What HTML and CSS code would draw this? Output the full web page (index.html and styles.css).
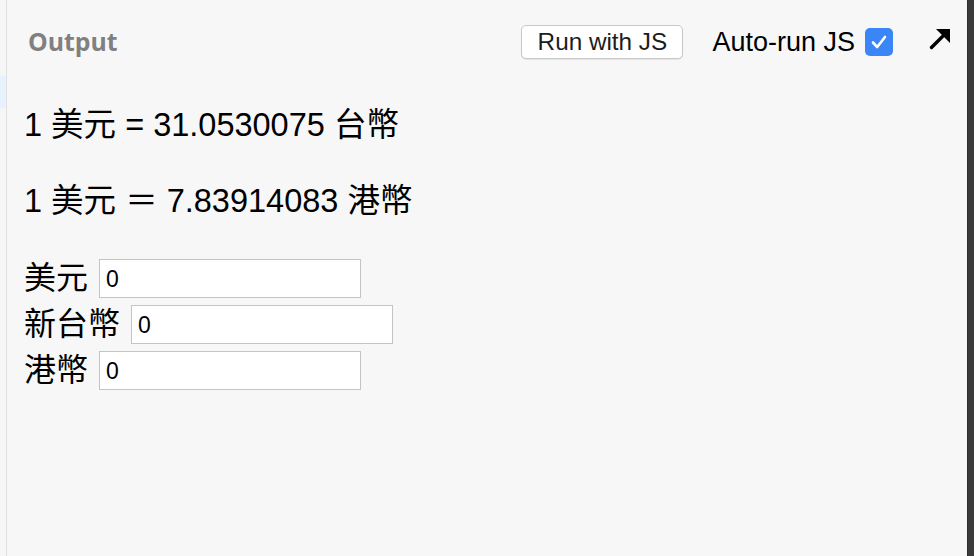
FILE: index.html
```html
<!DOCTYPE html>
<html lang="zh-Hant">
<head>
<meta charset="utf-8">
<title>Output</title>
<link rel="stylesheet" href="styles.css">
</head>
<body>
<div class="app">
  <div class="gutter"><div class="gutter-mark"></div></div>
  <div class="panel">
    <div class="header">
      <div class="title">Output</div>
      <div class="controls">
        <button class="run-btn" type="button">Run with JS</button>
        <label class="autorun">Auto-run JS <span class="check"><svg viewBox="0 0 28 28" width="28" height="28"><path d="M8 14.5 L12.2 19 L20 9" fill="none" stroke="#fff" stroke-width="2.6" stroke-linecap="round" stroke-linejoin="round"/></svg></span></label>
        <span class="expand"><svg viewBox="0 0 24 24" width="24" height="24"><polygon points="8,3 22,3 22,17" fill="#000"/><line x1="3.5" y1="21.5" x2="16" y2="9" stroke="#000" stroke-width="3.4" stroke-linecap="round"/></svg></span>
      </div>
    </div>
    <div class="content">
      <p class="rate">1 美元 = 31.0530075 台幣</p>
      <p class="rate">1 美元 ＝ 7.83914083 港幣</p>
      <div class="form">
        <div class="row"><span class="lbl">美元</span><input class="field" type="text" value="0"></div>
        <div class="row"><span class="lbl">新台幣</span><input class="field" type="text" value="0"></div>
        <div class="row"><span class="lbl">港幣</span><input class="field" type="text" value="0"></div>
      </div>
    </div>
  </div>
  <div class="scrollbar"></div>
</div>
</body>
</html>
```

FILE: styles.css
```css
html, body {
  margin: 0;
  padding: 0;
  width: 974px;
  height: 556px;
  overflow: hidden;
  font-family: "Liberation Sans", Arial, "Noto Sans CJK TC", sans-serif;
}
.app {
  display: flex;
  height: 556px;
}
.gutter {
  width: 6px;
  background: #f6f6f6;
  border-right: 1px solid #e0e0e0;
  padding-top: 76px;
  box-sizing: content-box;
}
.gutter-mark {
  height: 32px;
  background: #e8f1fe;
}
.panel {
  flex: 1;
  background: #f7f7f7;
  display: flex;
  flex-direction: column;
}
.scrollbar {
  width: 6px;
  background: #3b3b3b;
  border-left: 1px solid #2e2e2e;
}
.header {
  display: flex;
  align-items: center;
  justify-content: space-between;
  height: 84px;
  padding: 0 15px 0 21px;
}
.title {
  font-family: "Open Sans", "Noto Sans", sans-serif;
  font-weight: 700;
  font-size: 24.8px;
  color: #808080;
  margin-top: -3px;
}
.controls {
  display: flex;
  align-items: center;
}
.run-btn {
  font-family: "Liberation Sans", Arial, sans-serif;
  font-size: 24.3px;
  color: #1c1c1c;
  background: #fff;
  border: 1px solid #c8c8c8;
  border-radius: 5px;
  height: 34px;
  width: 162px;
  padding: 0;
  box-shadow: 0 1px 1px rgba(0,0,0,0.08);
}
.autorun {
  display: flex;
  align-items: center;
  font-size: 27px;
  color: #000;
  margin-left: 29px;
  gap: 10px;
}
.check {
  width: 28px;
  height: 28px;
  background: #3b86f7;
  border-radius: 5px;
  display: block;
}
.check svg { display: block; }
.expand {
  margin-left: 35px;
  display: block;
  width: 24px;
  height: 24px;
  margin-top: -8px;
}
.expand svg { display: block; }
.content {
  padding: 20px 17px 0;
  color: #000;
}
.rate {
  margin: 0;
  font-size: 32.5px;
  line-height: 40px;
  height: 76px;
}
.content .rate:first-child { margin-top: 1px; }
.form {
  display: flex;
  flex-direction: column;
  gap: 7px;
  margin-top: 2px;
}
.row {
  display: flex;
  align-items: center;
  gap: 11px;
  height: 39px;
}
.lbl {
  font-size: 32px;
  line-height: 39px;
}
.field {
  width: 262px;
  height: 39px;
  box-sizing: border-box;
  border: 1px solid #c4c4c4;
  background: #fff;
  font-family: "Liberation Sans", Arial, sans-serif;
  font-size: 23px;
  padding: 2px 6px 0;
  margin: 0;
  color: #000;
  border-radius: 0;
  outline: none;
}
```
